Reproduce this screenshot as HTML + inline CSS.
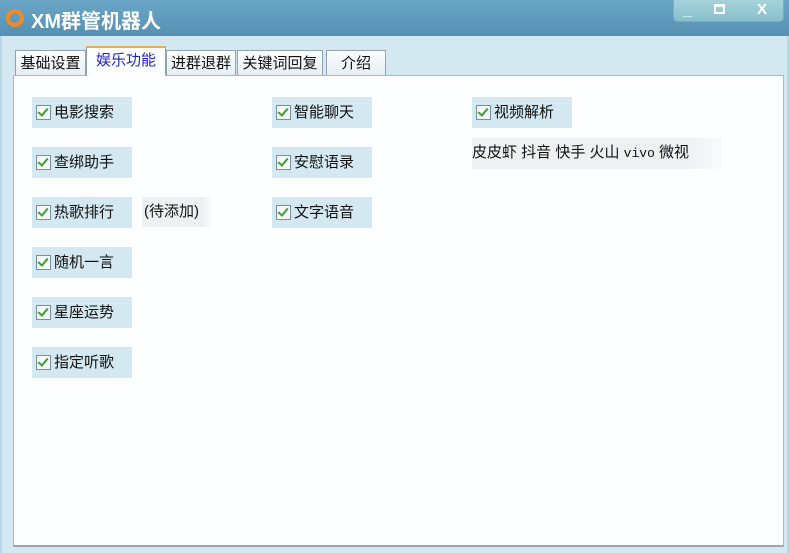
<!DOCTYPE html>
<html><head><meta charset="utf-8"><style>
*{margin:0;padding:0;box-sizing:border-box}
body{width:789px;height:553px;overflow:hidden;background:#cfe4ef;font-family:"Liberation Sans","Noto Sans CJK SC",sans-serif;position:relative}
.title{position:absolute;left:0;top:0;width:789px;height:36px;background:linear-gradient(#6aa6c6,#5590b3)}
.ttl{position:absolute;left:31px;top:5px;color:#fff;font-size:20px;font-weight:bold}
.ring{position:absolute;left:6px;top:9px;width:18px;height:18px;border:4px solid #f08a24;border-radius:50%}
.btns{position:absolute;left:673px;top:0;width:111px;height:22px;background:linear-gradient(#a6d3db,#86c0cb);border-radius:0 0 5px 5px;border:1px solid #7ab0bd;border-top:none}
.btns span{position:absolute;color:#fff;font-weight:bold}
.frame{position:absolute;left:0;top:36px;width:789px;height:517px;background:#d4e8f2;border-left:2px solid #b8d6e4;border-right:2px solid #b8d6e4}
.panel{position:absolute;left:13px;top:75px;width:771px;height:472px;background:#fdfeff;border:1px solid #a8b8c4;border-bottom:2px solid #9aa8b2}
.tab{position:absolute;top:50px;height:26px;background:linear-gradient(#fbfdfe,#e6eef3);border:1px solid #8ea4b2;border-bottom:none;font-size:15px;color:#111;text-align:center;line-height:25px}
.tab.sel{top:46px;height:30px;background:#fdfeff;color:#2223c8;border-top:2px solid #f0b040;z-index:2}
.cb{position:absolute;width:100px;height:31px;background:#d3e8f0;font-size:15px;color:#111;line-height:31px;padding-left:22px}
.cb:before{content:"";position:absolute;left:4px;top:8px;width:13px;height:13px;border:1px solid #7a8d9a;background:#f4f8fa}
.cb:after{content:"";position:absolute;left:8px;top:9px;width:4px;height:8px;border:solid #3aa02a;border-width:0 2px 2px 0;transform:rotate(40deg)}
.lbl{position:absolute;font-size:15px;color:#111;line-height:30px;background:linear-gradient(90deg,#eef0f2 85%,#fafbfc)}
</style></head><body>
<div class="title"><div class="ring"></div><div class="ttl">XM群管机器人</div>
<div class="btns"><span style="left:9px;top:2px">_</span><span style="left:40px;top:4px;width:11px;height:10px;border:2px solid #fff;border-top-width:3px"></span><span style="left:83px;top:1px;font-size:15px">X</span></div></div>
<div class="frame"></div>
<div class="tab" style="left:15px;width:71px">基础设置</div>
<div class="tab sel" style="left:86px;width:80px">娱乐功能</div>
<div class="tab" style="left:166px;width:70px">进群退群</div>
<div class="tab" style="left:237px;width:86px">关键词回复</div>
<div class="tab" style="left:326px;width:60px">介绍</div>
<div class="panel"></div>
<div class="cb" style="left:32px;top:97px">电影搜索</div>
<div class="cb" style="left:32px;top:147px">查绑助手</div>
<div class="cb" style="left:32px;top:197px">热歌排行</div>
<div class="cb" style="left:32px;top:247px">随机一言</div>
<div class="cb" style="left:32px;top:297px">星座运势</div>
<div class="cb" style="left:32px;top:347px">指定听歌</div>
<div class="lbl" style="left:142px;top:197px;width:70px;padding-left:2px">(待添加)</div>
<div class="cb" style="left:272px;top:97px">智能聊天</div>
<div class="cb" style="left:272px;top:147px">安慰语录</div>
<div class="cb" style="left:272px;top:197px">文字语音</div>
<div class="cb" style="left:472px;top:97px">视频解析</div>
<div class="lbl" style="left:472px;top:138px;width:250px;white-space:nowrap">皮皮虾 抖音 快手 火山 <span style="font-family:'Liberation Mono',monospace;font-size:13px">vivo</span> 微视</div>
</body></html>
